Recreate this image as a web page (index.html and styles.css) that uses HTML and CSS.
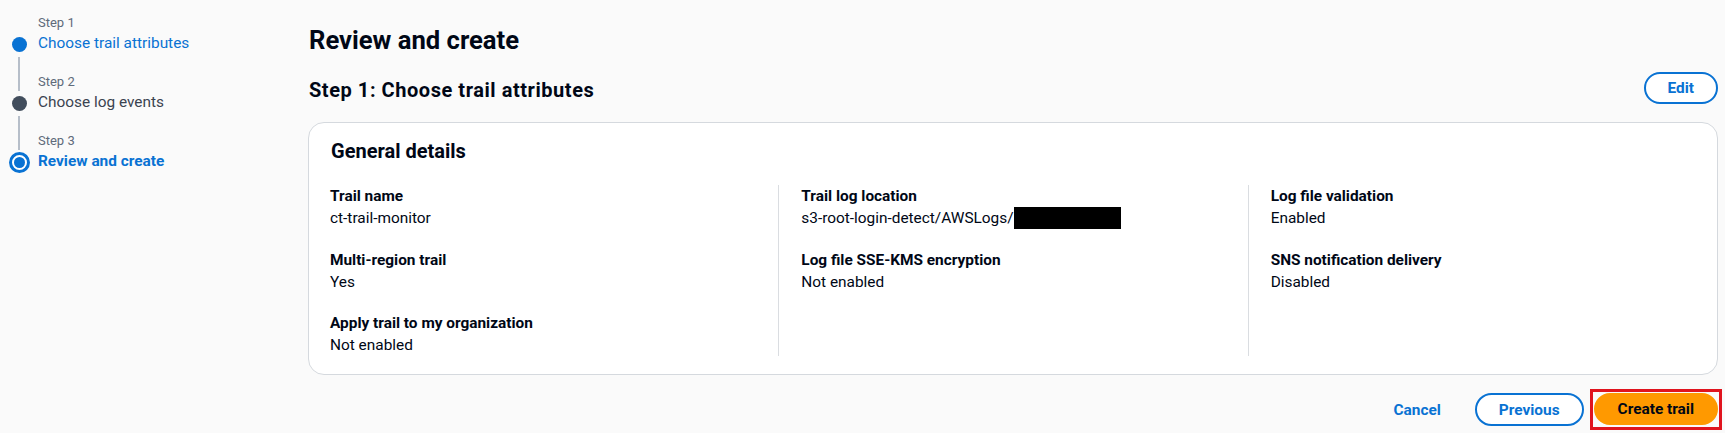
FILE: index.html
```
<!DOCTYPE html>
<html lang="en">
<head>
<meta charset="utf-8">
<title>Review and create</title>
<link rel="stylesheet" href="styles.css">
</head>
<body>
<div class="page">
  <nav class="steps">
    <div class="step">
      <div class="indicator">
        <div class="seg seg-top hidden"></div>
        <div class="dot-row"><span class="dot dot-done"></span></div>
        <div class="seg seg-bottom"></div>
      </div>
      <div class="step-text">
        <div class="step-label">Step 1</div>
        <div class="step-title link">Choose trail attributes</div>
      </div>
    </div>
    <div class="step">
      <div class="indicator">
        <div class="seg seg-top"></div>
        <div class="dot-row"><span class="dot dot-dark"></span></div>
        <div class="seg seg-bottom"></div>
      </div>
      <div class="step-text">
        <div class="step-label">Step 2</div>
        <div class="step-title">Choose log events</div>
      </div>
    </div>
    <div class="step">
      <div class="indicator">
        <div class="seg seg-top"></div>
        <div class="dot-row"><span class="dot dot-active"><span class="dot-inner"></span></span></div>
        <div class="seg seg-bottom hidden"></div>
      </div>
      <div class="step-text">
        <div class="step-label">Step 3</div>
        <div class="step-title current">Review and create</div>
      </div>
    </div>
  </nav>

  <main class="main">
    <h1 class="page-title">Review and create</h1>
    <div class="section-head">
      <h2 class="section-title">Step 1: Choose trail attributes</h2>
      <button class="btn btn-normal" type="button">Edit</button>
    </div>

    <section class="card">
      <h3 class="card-title">General details</h3>
      <div class="cols">
        <div class="col">
          <div class="kv"><div class="key">Trail name</div><div class="val">ct-trail-monitor</div></div>
          <div class="kv"><div class="key">Multi-region trail</div><div class="val">Yes</div></div>
          <div class="kv"><div class="key">Apply trail to my organization</div><div class="val">Not enabled</div></div>
        </div>
        <div class="col col-divided">
          <div class="kv"><div class="key">Trail log location</div><div class="val">s3-root-login-detect/AWSLogs/<span class="redacted"></span></div></div>
          <div class="kv"><div class="key">Log file SSE-KMS encryption</div><div class="val">Not enabled</div></div>
        </div>
        <div class="col col-divided">
          <div class="kv"><div class="key">Log file validation</div><div class="val">Enabled</div></div>
          <div class="kv"><div class="key">SNS notification delivery</div><div class="val">Disabled</div></div>
        </div>
      </div>
    </section>

    <div class="actions">
      <button class="btn btn-link" type="button">Cancel</button>
      <button class="btn btn-normal" type="button">Previous</button>
      <button class="btn btn-primary highlighted" type="button">Create trail</button>
    </div>
  </main>
</div>
</body>
</html>
```

FILE: styles.css
```
* { box-sizing: border-box; }

html, body {
  margin: 0;
  padding: 0;
}

body {
  background: #fafafa;
  font-family: Roboto, "Liberation Sans", Arial, sans-serif;
  color: #000716;
  font-size: 15.4px;
  line-height: 22px;
}

.page {
  display: flex;
  align-items: flex-start;
  width: 1725px;
  min-height: 433px;
}

/* ---------- Steps sidebar ---------- */
.steps {
  width: 308px;
  flex: 0 0 308px;
  padding-top: 13px;
  display: flex;
  flex-direction: column;
}

.step {
  display: flex;
  align-items: stretch;
}

.indicator {
  width: 38px;
  flex: 0 0 38px;
  display: flex;
  flex-direction: column;
  align-items: center;
}

.seg {
  width: 2px;
  background: #b6bec9;
}

.seg.hidden { background: transparent; }

.seg-top {
  height: 19px;
}

.seg-bottom {
  flex: 1 1 auto;
  margin-top: 3px;
}

.dot-row {
  height: 22px;
  display: flex;
  align-items: center;
  justify-content: center;
  padding-top: 2px;
}

.dot {
  display: block;
  width: 15px;
  height: 15px;
  border-radius: 50%;
}

.dot-done { background: #0972d3; }
.dot-dark { background: #414d5c; }

.dot-active {
  width: 21px;
  height: 21px;
  border: 3px solid #0972d3;
  background: #ffffff;
  display: flex;
  align-items: center;
  justify-content: center;
}

.dot-inner {
  display: block;
  width: 11px;
  height: 11px;
  border-radius: 50%;
  background: #0972d3;
}

.step-text {
  padding-bottom: 18px;
}

.step-label {
  font-size: 13px;
  line-height: 19px;
  color: #5f6b7a;
}

.step-title {
  font-size: 15.4px;
  line-height: 22px;
  color: #3a4350;
}

.step-title.link { color: #0972d3; }
.step-title.current { color: #0972d3; font-weight: 700; }

/* ---------- Main ---------- */
.main {
  flex: 1 1 auto;
  padding: 24px 7px 7px 0;
  display: flex;
  flex-direction: column;
}

.page-title {
  margin: 0 0 16px 1px;
  font-size: 25.6px;
  line-height: 32px;
  font-weight: 700;
  color: #000716;
}

.section-head {
  display: flex;
  justify-content: space-between;
  align-items: flex-start;
  height: 32px;
}

.section-title {
  margin: 6px 0 0 1px;
  font-size: 20px;
  line-height: 24px;
  font-weight: 700;
  letter-spacing: 0.55px;
}

.btn {
  font-family: inherit;
  font-size: 15.4px;
  font-weight: 700;
  line-height: 20px;
  border-radius: 20px;
  padding: 4px 22px;
  cursor: pointer;
  height: 32px;
  margin: 0;
}

.btn-normal {
  background: #ffffff;
  color: #0972d3;
  border: 2px solid #0972d3;
}

.btn-link {
  background: transparent;
  border: 2px solid transparent;
  color: #0972d3;
}

.btn-primary {
  background: #ff9900;
  border: 2px solid #ff9900;
  color: #000716;
}

/* annotation frame drawn over the primary button */
.highlighted {
  position: relative;
  overflow: visible;
}

.highlighted::after {
  content: "";
  position: absolute;
  top: -6px;
  right: -6px;
  bottom: -7px;
  left: -6px;
  border: 3px solid #e0141e;
  pointer-events: none;
}

/* ---------- Card ---------- */
.card {
  margin-top: 18px;
  background: #ffffff;
  border: 1px solid #d5d9de;
  border-radius: 16px;
  padding: 16px 0 18px 0;
}

.card-title {
  margin: 0;
  padding-left: 22px;
  font-size: 20px;
  line-height: 24px;
  font-weight: 700;
}

.cols {
  margin-top: 22px;
  display: grid;
  grid-template-columns: 1fr 1fr 1fr;
}

.col {
  display: flex;
  flex-direction: column;
  gap: 19.5px;
  padding-left: 21px;
  padding-right: 20px;
}

.col-divided {
  border-left: 1px solid #dadde1;
  padding-left: 22px;
}

.key {
  font-weight: 700;
  line-height: 22px;
}

.val {
  line-height: 22px;
  display: flex;
  align-items: flex-start;
}

.redacted {
  display: inline-block;
  width: 107px;
  height: 22px;
  background: #000000;
}

/* ---------- Actions ---------- */
.actions {
  margin-top: 18px;
  display: flex;
  justify-content: flex-end;
  align-items: flex-start;
  gap: 10px;
}

.actions .btn { height: 33px; }
.actions .btn-primary { height: 32px; }
```
